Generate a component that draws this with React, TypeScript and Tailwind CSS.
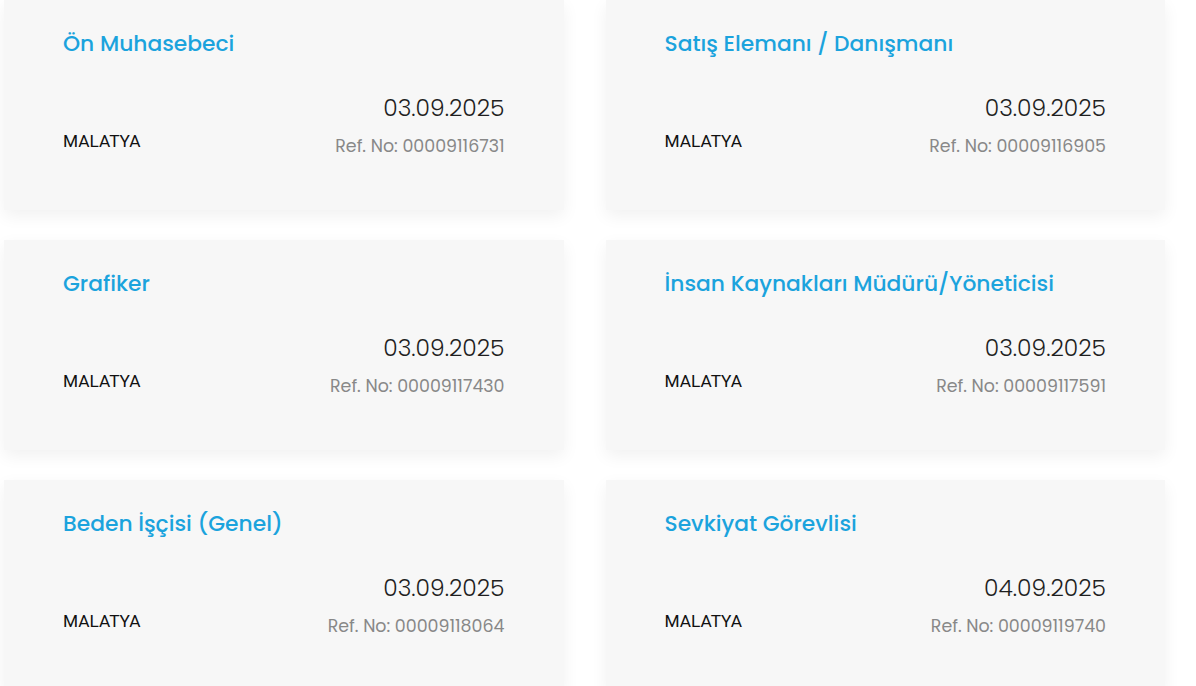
import React from 'react'

type Job = { title: string; city: string; date: string; ref: string }

const jobs: Job[] = [
    { title: 'Ön Muhasebeci', city: 'MALATYA', date: '03.09.2025', ref: '00009116731' },
    { title: 'Satış Elemanı / Danışmanı', city: 'MALATYA', date: '03.09.2025', ref: '00009116905' },
    { title: 'Grafiker', city: 'MALATYA', date: '03.09.2025', ref: '00009117430' },
    { title: 'İnsan Kaynakları Müdürü/Yöneticisi', city: 'MALATYA', date: '03.09.2025', ref: '00009117591' },
    { title: 'Beden İşçisi (Genel)', city: 'MALATYA', date: '03.09.2025', ref: '00009118064' },
    { title: 'Sevkiyat Görevlisi', city: 'MALATYA', date: '04.09.2025', ref: '00009119740' },
]

function JobCard({ job }: { job: Job }) {
    return (
        <div className="h-[210px] bg-[#f7f7f7] shadow-[0_6px_16px_rgba(0,0,0,0.06)] pl-[59px] pr-[59px] pt-[30px]">
            <h3 className="text-[21.8px] leading-[28px] font-medium text-[#1ba3dd]">{job.title}</h3>
            <div className="mt-[35px] flex items-end justify-between">
                <span className="text-[17.3px] leading-[30px] text-[#111] mb-[1px]" style={{ fontFamily: 'Roboto, "Liberation Sans", sans-serif' }}>{job.city}</span>
                <div className="flex flex-col items-end">
                    <span className="text-[23.4px] leading-[30px] font-light text-[#1f1f1f]">{job.date}</span>
                    <span className="mt-[12px] text-[17.4px] leading-[22px] text-[#888]">Ref. No: {job.ref}</span>
                </div>
            </div>
        </div>
    )
}

export default function App() {
    return (
        <div className="min-h-screen bg-white overflow-hidden" style={{ fontFamily: 'Poppins, Inter, "Noto Sans", sans-serif' }}>
            <div className="ml-[4px] w-[1161px] grid grid-cols-2 gap-x-[42px] gap-y-[30px]">
                {jobs.map(j => <JobCard key={j.ref} job={j} />)}
            </div>
        </div>
    )
}
